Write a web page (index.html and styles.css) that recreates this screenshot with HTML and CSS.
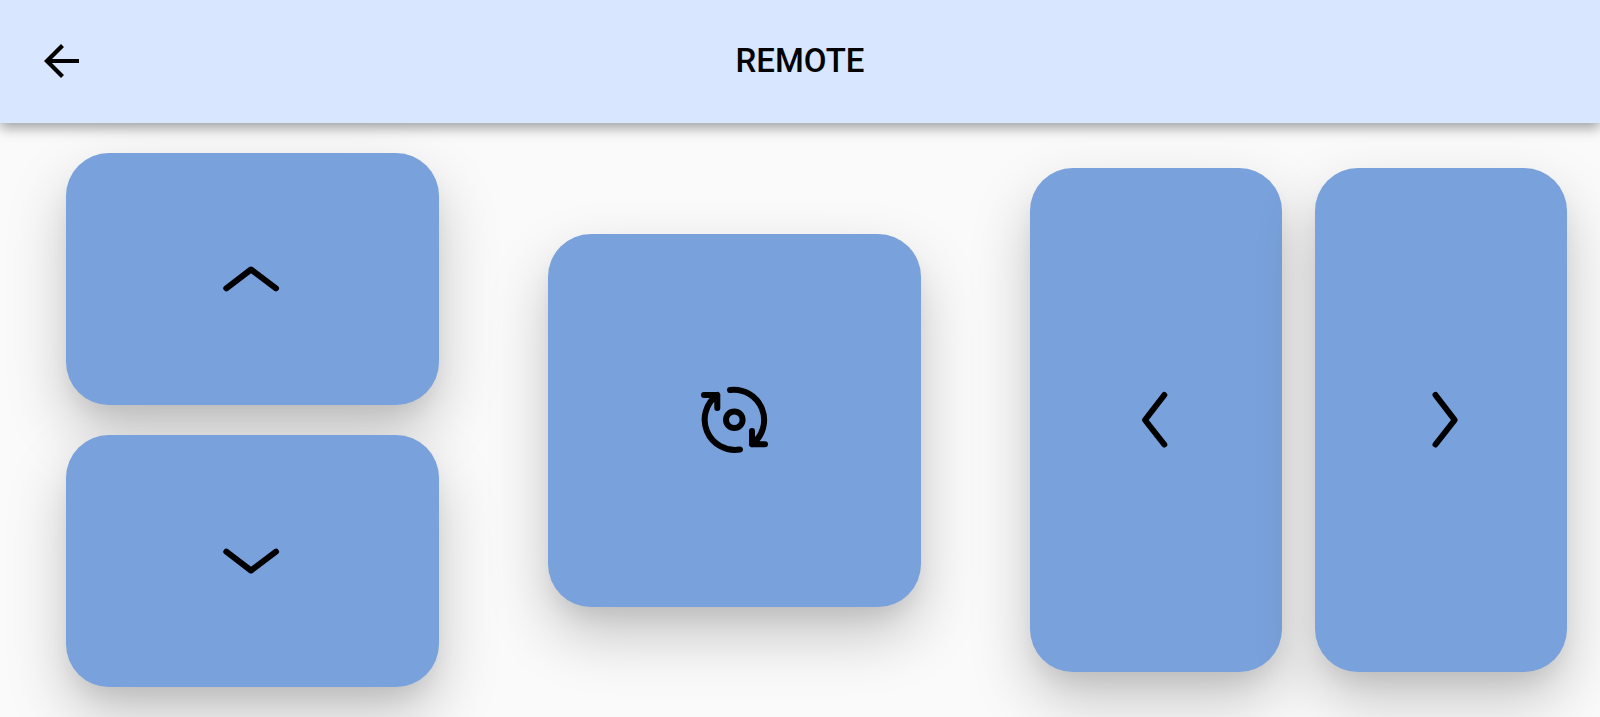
FILE: index.html
```html
<!DOCTYPE html>
<html lang="en">
<head>
<meta charset="utf-8">
<meta name="viewport" content="width=device-width, initial-scale=1">
<title>Remote</title>
<link rel="stylesheet" href="styles.css">
</head>
<body>
<header class="bar">
  <button class="back" type="button" aria-label="Back">
    <svg viewBox="0 0 36 36" width="36" height="36" aria-hidden="true"><path d="M35 16v4H8l12 12-3 3L0 18 17 1l3 3L8 16z"/></svg>
  </button>
  <h1 class="title">REMOTE</h1>
</header>
<main class="pad">
  <div class="stack">
    <button class="key key-wide" type="button" aria-label="Up">
      <svg class="icon" viewBox="0 0 72 72" aria-hidden="true"><path d="M9.3 45.3 34 26.5 59 45.3"/></svg>
    </button>
    <button class="key key-wide" type="button" aria-label="Down">
      <svg class="icon" viewBox="0 0 72 72" aria-hidden="true"><path d="M9.3 26.7 34 45.5 59 26.7"/></svg>
    </button>
  </div>
  <button class="key key-square" type="button" aria-label="Rotate">
    <svg class="icon" viewBox="0 0 72 72" aria-hidden="true"><circle cx="35.3" cy="35.7" r="8.3"/><path d="M31 6A30.3 30.3 0 0 1 53 60.3M41 65.5A30.3 30.3 0 0 1 18.3 11M5 11H18.3V24M66 60.3H53V47"/></svg>
  </button>
  <div class="sides">
    <button class="key key-tall" type="button" aria-label="Left">
      <svg class="icon" viewBox="0 0 72 72" aria-hidden="true"><path d="M44.3 11 25 36 44.3 60.5"/></svg>
    </button>
    <button class="key key-tall" type="button" aria-label="Right">
      <svg class="icon" viewBox="0 0 72 72" aria-hidden="true"><path d="M30.5 11 49.7 36 30.5 60.5"/></svg>
    </button>
  </div>
</main>
</body>
</html>
```
FILE: styles.css
```css
* {
  box-sizing: border-box;
}

body {
  margin: 0;
  min-height: 100vh;
  display: flex;
  flex-direction: column;
  overflow: hidden;
  background: #fafafa;
  font-family: Roboto, sans-serif;
}

button {
  margin: 0;
  padding: 0;
  border: 0;
  background: none;
  color: #000;
  cursor: pointer;
}

.bar {
  display: grid;
  grid-template-columns: 1fr auto 1fr;
  align-items: center;
  min-height: 123px;
  padding: 0 44px 2px;
  background: #d8e7ff;
  box-shadow: 0 5px 12px rgba(0, 0, 0, 0.36);
}

.back {
  display: flex;
  justify-self: start;
}

.title {
  margin: 0;
  font-size: 33px;
  font-weight: 500;
  line-height: 40px;
}

.pad {
  flex: 1;
  display: grid;
  grid-template-columns: 373fr 373fr 537fr;
  align-items: center;
  gap: 109px;
  padding: 0 33px 0 66px;
}

.stack {
  display: grid;
  gap: 30px;
}

.sides {
  display: grid;
  grid-template-columns: 1fr 1fr;
  gap: 33px;
}

.key {
  display: flex;
  align-items: center;
  justify-content: center;
  width: 100%;
  border-radius: 43px;
  background: #79a1db;
  box-shadow:
    0 14px 22px -6px rgba(0, 0, 0, 0.08),
    0 28px 60px rgba(0, 0, 0, 0.21);
}

.key-wide {
  aspect-ratio: 373 / 252;
}

.key-square {
  aspect-ratio: 1;
}

.key-tall {
  aspect-ratio: 1 / 2;
}

.icon {
  width: 72px;
  height: 72px;
  fill: none;
  stroke: currentColor;
  stroke-width: 6;
  stroke-linecap: round;
  stroke-linejoin: round;
}
```
